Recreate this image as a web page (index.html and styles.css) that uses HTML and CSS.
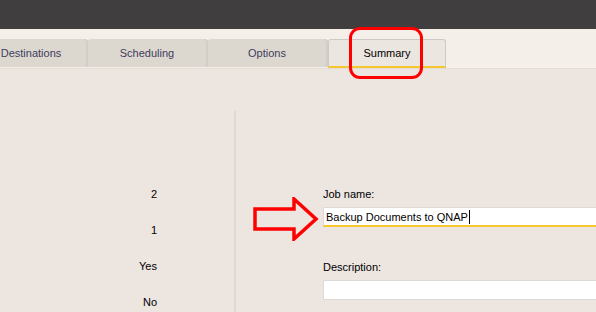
FILE: index.html
```html
<!DOCTYPE html>
<html lang="en">
<head>
  <meta charset="UTF-8">
  <title>Backup Job - Summary</title>
  <link rel="stylesheet" href="styles.css">
</head>
<body>
  <div class="titlebar"></div>
  <div class="tabstrip">
    <div class="tab first">Destinations</div>
    <div class="tab">Scheduling</div>
    <div class="tab">Options</div>
    <div class="tab active">Summary
      <span class="callout"></span>
    </div>
  </div>

  <div class="content">
    <div class="stats">
      <div class="stat">2</div>
      <div class="stat">1</div>
      <div class="stat">Yes</div>
      <div class="stat">No</div>
    </div>
    <div class="divider"></div>
    <div class="form">
      <svg class="arrow" width="66" height="44" viewBox="0 0 66 44">
        <path d="M2 12 H41 V2 L63 22 L41 42 V32 H2 Z" fill="none" stroke="#f00" stroke-width="3.5" stroke-linejoin="miter"/>
      </svg>
      <label class="field-label">Job name:</label>
      <div class="input focused">Backup Documents to QNAP<span class="caret"></span></div>
      <label class="field-label desc">Description:</label>
      <div class="input"></div>
    </div>
  </div>
</body>
</html>
```

FILE: styles.css
```css
body {
  margin: 0;
  width: 596px;
  height: 312px;
  overflow: hidden;
  background-color: #ece5e0;
  font-family: Tahoma, "Liberation Sans", sans-serif;
  font-size: 11px;
  color: #000;
}
.titlebar {
  height: 29px;
  background-color: #403e3f;
}
.tabstrip {
  display: flex;
  gap: 2px;
  height: 29px;
  padding-top: 10px;
  background-color: #f5efe9;
  border-bottom: 1px solid #e3ddd6;
  box-sizing: content-box;
}
.tab {
  position: relative;
  width: 118px;
  height: 28px;
  display: flex;
  align-items: center;
  justify-content: center;
  background-color: #ddd8cf;
  color: #3d3d5e;
  border-radius: 3px 3px 0 0;
  box-shadow: 2px 0 0 #d2cdc6;
}
.tab.first {
  margin-left: -32px;
  padding-left: 8px;
  box-sizing: border-box;
}
.tab.active {
  height: 26px;
  background-color: #ece6e0;
  color: #000;
  border: 1px solid #cdc9c4;
  border-bottom: 2px solid #f7c730;
  box-shadow: none;
  width: 116px;
}
.callout {
  position: absolute;
  left: 20px;
  top: -13px;
  width: 68px;
  height: 46px;
  border: 3px solid #f00;
  border-radius: 11px;
}
.content {
  display: flex;
  height: 244px;
}
.stats {
  width: 157px;
  padding-top: 119px;
  display: flex;
  flex-direction: column;
  align-items: flex-end;
  gap: 23px;
  color: #000;
}
.stat {
  line-height: 13px;
}
.divider {
  width: 2px;
  margin-left: 77px;
  margin-top: 42px;
  background-color: #dcd8d4;
}
.form {
  position: relative;
  flex: 1;
  padding-left: 87px;
  padding-top: 119px;
}
.arrow {
  position: absolute;
  left: 17px;
  top: 128px;
}
.field-label {
  display: block;
  line-height: 13px;
  margin-bottom: 6px;
}
.field-label.desc {
  margin-top: 34px;
}
.input {
  height: 20px;
  background-color: #fff;
  border: 1px solid #dedad6;
  border-right: none;
  line-height: 19px;
  padding-left: 2px;
  box-sizing: border-box;
}
.input.focused {
  border-bottom: 2px solid #f7c730;
}
.caret {
  display: inline-block;
  width: 1px;
  height: 14px;
  margin-left: 1px;
  vertical-align: -3px;
  background-color: #000;
}
```
